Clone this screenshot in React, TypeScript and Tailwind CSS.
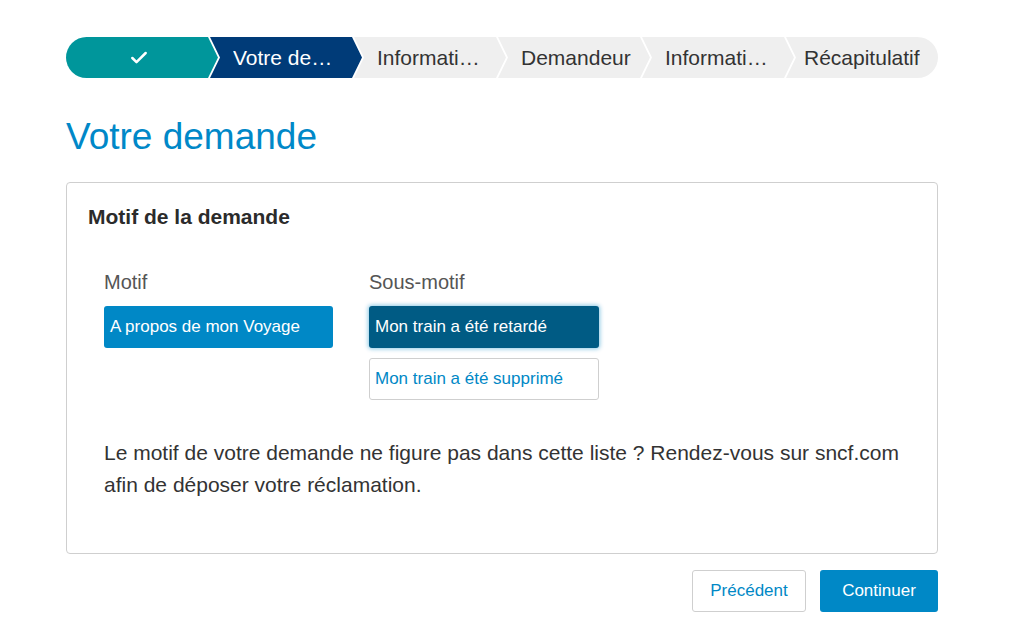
import { Check } from 'lucide-react'

const steps = ['Votre demande', 'Informations', 'Demandeur', 'Informations', 'Récapitulatif']

function Stepper() {
  return (
    <div className="flex h-[41px] w-full">
      <div className="relative flex w-[152px] shrink-0 items-center justify-center rounded-l-full bg-[#00969b] pr-[6px] [clip-path:polygon(0_0,calc(100%-10px)_0,100%_50%,calc(100%-10px)_100%,0_100%)]">
        <Check className="h-5 w-5 text-white" strokeWidth={3} />
      </div>
      {steps.map((label, i) => {
        const active = i === 0
        const last = i === steps.length - 1
        return (
          <div
            key={i}
            className={
              'relative -ml-[8px] flex w-[152px] min-w-0 shrink-0 items-center ' +
              (active ? 'bg-[#003b78] text-white ' : 'bg-[#efefef] text-[#333] ') +
              (last
                ? 'rounded-r-full pl-[18px] pr-[8px] [clip-path:polygon(0_0,100%_0,100%_100%,0_100%,10px_50%)]'
                : 'pl-[23px] pr-[17px] [clip-path:polygon(0_0,calc(100%-10px)_0,100%_50%,calc(100%-10px)_100%,0_100%,10px_50%)]')
            }
          >
            <span className="truncate text-[21px]">{label}</span>
          </div>
        )
      })}
    </div>
  )
}

export default function App() {
  return (
    <div className="min-h-[625px] bg-white font-['Liberation_Sans',Arial,sans-serif]">
      <div className="ml-[66px] w-[872px] pt-[37px]">
        <Stepper />

        <h1 className="mt-[37px] text-[37px] leading-[44px] text-[#0088c8]">Votre demande</h1>

        <div className="mt-[23px] rounded-[4px] border border-[#cfcfcf] px-[21px] pt-[22px] pb-[52px]">
          <h2 className="text-[21px] font-bold leading-[24px] text-[#2b2b2b]">Motif de la demande</h2>

          <div className="mt-[40px] flex gap-[36px] pl-[16px]">
            <div className="flex w-[229px] flex-col">
              <span className="text-[20px] leading-[26px] text-[#555]">Motif</span>
              <button className="mt-[11px] h-[42px] rounded-[3px] bg-[#0088c6] px-[6px] text-left text-[17px] text-white">
                A propos de mon Voyage
              </button>
            </div>
            <div className="flex w-[230px] flex-col">
              <span className="text-[20px] leading-[26px] text-[#555]">Sous-motif</span>
              <button className="mt-[11px] h-[42px] rounded-[3px] bg-[#005b84] px-[6px] text-left text-[17px] text-white shadow-[0_0_4px_1px_rgba(0,136,198,0.45)]">
                Mon train a été retardé
              </button>
              <button className="mt-[10px] h-[42px] rounded-[3px] border border-[#cfcfcf] bg-white px-[5px] text-left text-[17px] text-[#0088c6]">
                Mon train a été supprimé
              </button>
            </div>
          </div>

          <p className="mt-[37px] pl-[16px] text-[21px] leading-[32px] text-[#333]">
            Le motif de votre demande ne figure pas dans cette liste ? Rendez-vous sur sncf.com afin de déposer votre réclamation.
          </p>
        </div>

        <div className="mt-[16px] flex justify-end gap-[14px]">
          <button className="h-[42px] w-[114px] rounded-[3px] border border-[#cfcfcf] bg-white text-[17px] text-[#0088c6]">
            Précédent
          </button>
          <button className="h-[42px] w-[118px] rounded-[3px] bg-[#0088c6] text-[17px] text-white">Continuer</button>
        </div>
      </div>
    </div>
  )
}
